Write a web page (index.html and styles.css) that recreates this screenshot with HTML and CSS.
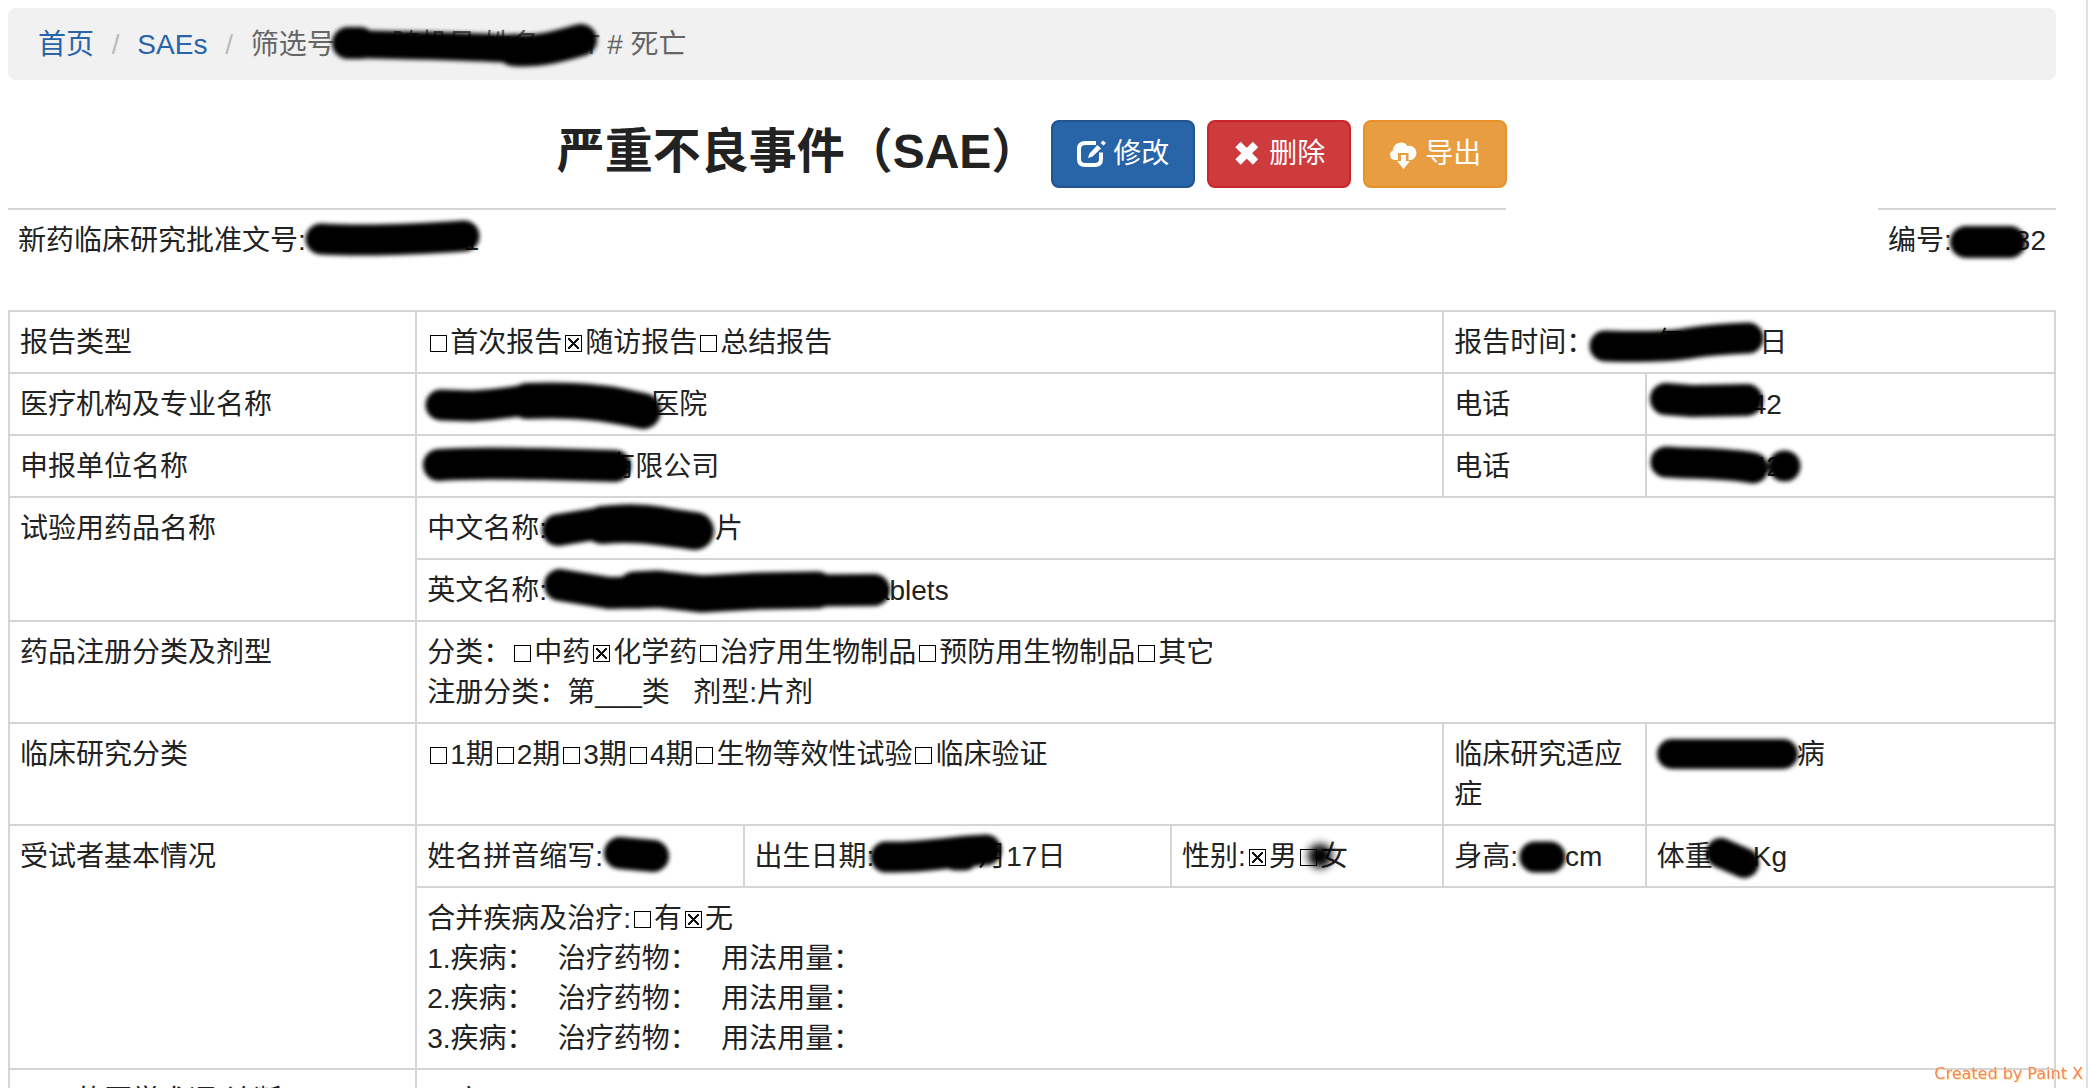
FILE: index.html
```html
<!doctype html>
<html lang="zh-CN">
<head>
    <title>严重不良事件（SAE）</title>
    <meta charset="utf-8" />
    <meta name="viewport" content="width=device-width, initial-scale=1" />
    <link rel="stylesheet" href="styles.css">
</head>

<body>
	<ol class="breadcrumb">
		<li><a href="#">首页</a></li>
		<li><a href="#">SAEs</a></li>
		<li class="active">筛选号<span class="ink ink-crumb">随机号 姓名<svg><path d="M13 19C60 20 120 21 158 23S215 26 246 16" stroke-width="28"/><path d="M13 18h12M178 25c24 2 40-2 68-10" stroke-width="32"/></svg></span>T # 死亡</li>
	</ol>

	<div class="title-bar">
		<h1>严重不良事件（SAE）</h1>
		<button type="button" class="btn btn-primary">
			<svg class="icon" viewBox="0 0 28 28"><path d="M19 3H8.500Q2 3 2 9V19Q2 25 8 25H18Q24 25 24 19V12.500" fill="none" stroke="#fff" stroke-width="4"/><path d="M11 18L12.500 13.500 20.500 5 24 8.500 15.500 16.500zM23.500 3L26 .5 29 3 26.500 5.500z" fill="#fff"/></svg>
			修改
		</button>
		<button type="button" class="btn btn-danger">
			<svg class="icon" viewBox="0 0 28 28"><path d="M5 4.500L22.500 22M22.500 4.500L5 22" fill="none" stroke="#fff" stroke-width="7.500"/></svg>
			删除
		</button>
		<button type="button" class="btn btn-warning">
			<svg class="icon" viewBox="0 0 28 28"><path d="M9 20H5.500A5 5 0 0 1 4 10.500A8 8 0 0 1 18.500 6A7 7 0 1 1 22 20H19.500V13H9z" fill="#fff"/><path d="M12 15h5v6h4l-6.500 8-6.500-8h4z" fill="#fff"/></svg>
			导出
		</button>
	</div>

	<div class="meta">
		<div class="meta-left">新药临床研究批准文号:<span class="ink ink-approval"><svg><path d="M15 18C50 20 100 19 158 15" stroke-width="31"/></svg></span>1</div>
		<div>编号:<span class="ink ink-serial"><svg><path d="M14 21H58" stroke-width="32"/></svg></span>32</div>
	</div>

	<table class="report">
		<colgroup>
			<col class="c1"><col class="c2"><col class="c3"><col class="c4"><col class="c5"><col>
		</colgroup>
		<tr>
			<td>报告类型</td>
			<td colspan="3"><label><input type="checkbox">首次报告</label><label><input type="checkbox" checked>随访报告</label><label><input type="checkbox">总结报告</label></td>
			<td colspan="2">报告时间：<span class="ink ink-date">年<svg><path d="M11 23C40 24 70 24 90 21S120 16 154 15" stroke-width="31"/></svg></span>日</td>
		</tr>
		<tr>
			<td>医疗机构及专业名称</td>
			<td colspan="3"><span class="ink ink-hospital"><svg><path d="M14 20L45 21C80 19 90 15 110 15S170 13 190 18L218 26" stroke-width="31"/><path d="M100 16C150 14 180 18 216 26" stroke-width="36"/></svg></span>医院</td>
			<td>电话</td>
			<td><span class="ink ink-phone"><svg><path d="M9 14L35 16 90 15" stroke-width="32"/></svg></span>42</td>
		</tr>
		<tr>
			<td>申报单位名称</td>
			<td colspan="3"><span class="ink ink-company"><svg><path d="M12 18C50 15 90 17 115 17L188 19" stroke-width="32"/></svg></span>有限公司</td>
			<td>电话</td>
			<td><span class="ink ink-phone"><svg><path d="M9 15C40 17 70 16 96 21M127 19h1" stroke-width="31"/></svg></span>42</td>
		</tr>
		<tr>
			<td rowspan="2">试验用药品名称</td>
			<td colspan="5">中文名称:<span class="ink ink-drug"><svg><path d="M11 21L55 14C80 9 110 10 149 22" stroke-width="32"/><path d="M55 16C90 13 110 17 148 22" stroke-width="38"/></svg></span>片</td>
		</tr>
		<tr>
			<td colspan="5">英文名称:<span class="ink ink-drug-en"><svg><path d="M13 14L62 22 112 21 327 19" stroke-width="32"/><path d="M88 19L110 18 155 23 210 20 270 19" stroke-width="37"/></svg></span>ablets</td>
		</tr>
		<tr>
			<td>药品注册分类及剂型</td>
			<td colspan="5">分类：<label><input type="checkbox">中药</label><label><input type="checkbox" checked>化学药</label><label><input type="checkbox">治疗用生物制品</label><label><input type="checkbox">预防用生物制品</label><label><input type="checkbox">其它</label><br>
			注册分类：第___类&nbsp;&nbsp;&nbsp;剂型:片剂</td>
		</tr>
		<tr>
			<td>临床研究分类</td>
			<td colspan="3"><label><input type="checkbox">1期</label><label><input type="checkbox">2期</label><label><input type="checkbox">3期</label><label><input type="checkbox">4期</label><label><input type="checkbox">生物等效性试验</label><label><input type="checkbox">临床验证</label></td>
			<td>临床研究适应症</td>
			<td><span class="ink ink-disease"><svg><path d="M15 19H126" stroke-width="30"/></svg></span>病</td>
		</tr>
		<tr>
			<td rowspan="2">受试者基本情况</td>
			<td>姓名拼音缩写:<span class="ink ink-initials"><svg><path d="M17 16L50 19" stroke-width="32"/></svg></span></td>
			<td>出生日期:<span class="ink ink-birth">月<svg><path d="M12 20C50 21 80 14 112 13M82 18h8" stroke-width="31"/></svg></span>17日</td>
			<td>性别:<label><input type="checkbox" checked>男</label><label><input type="checkbox"><span class="ink ink-smudge"><svg><circle cx="0" cy="19" r="12"/></svg></span>女</label></td>
			<td>身高:<span class="ink ink-height"><svg><path d="M17 20H32" stroke-width="31"/></svg></span>cm</td>
			<td>体重<span class="ink ink-weight"><svg><path d="M8 16L31 26" stroke-width="30"/></svg></span>Kg</td>
		</tr>
		<tr>
			<td colspan="5">合并疾病及治疗:<label><input type="checkbox">有</label><label><input type="checkbox" checked>无</label><br>
			1.疾病：&nbsp;&nbsp;&nbsp;治疗药物：&nbsp;&nbsp;&nbsp;用法用量：<br>
			2.疾病：&nbsp;&nbsp;&nbsp;治疗药物：&nbsp;&nbsp;&nbsp;用法用量：<br>
			3.疾病：&nbsp;&nbsp;&nbsp;治疗药物：&nbsp;&nbsp;&nbsp;用法用量：</td>
		</tr>
		<tr>
			<td>SAE的医学术语(诊断)</td>
			<td colspan="5">死亡</td>
		</tr>
	</table>

	<div class="watermark">Created by Paint X</div>
</body>
</html>
```
FILE: styles.css
```css
* {
	box-sizing: border-box;
}
body {
	margin: 0;
	padding: 8px 30px 0 8px;
	min-height: 100vh;
	border-right: 2px solid #e0e0e0;
	background-color: #fff;
	color: #222;
	font-family: "Liberation Sans", "Noto Sans CJK SC", sans-serif;
	font-size: 28px;
	line-height: 40px;
}

/* breadcrumb */
.breadcrumb {
	margin: 0 0 40px;
	padding: 17px 30px 15px;
	list-style: none;
	background-color: #f1f1f1;
	border-radius: 8px;
}
.breadcrumb li {
	display: inline-block;
}
.breadcrumb li + li:before {
	content: "/\00a0";
	padding: 0 10px;
	color: #bbb;
}
.breadcrumb a {
	color: #2864a8;
	text-decoration: none;
}
.breadcrumb .active {
	color: #666;
}

/* title and buttons */
.title-bar {
	display: flex;
	justify-content: center;
	align-items: baseline;
	gap: 12px;
	margin-bottom: 20px;
}
h1 {
	margin: 0;
	font-size: 48px;
	line-height: 52px;
	font-weight: bold;
}
.btn {
	display: flex;
	align-items: center;
	gap: 8px;
	padding: 12px 24px;
	border: 2px solid;
	border-radius: 8px;
	color: #fff;
	font-family: inherit;
	font-size: 28px;
	line-height: 40px;
	cursor: pointer;
}
.btn-primary {
	background-color: #2864a8;
	border-color: #225590;
}
.btn-danger {
	background-color: #ce3b3d;
	border-color: #c9262b;
}
.btn-warning {
	background-color: #e89d40;
	border-color: #e6912a;
}
.icon {
	width: 28px;
	height: 28px;
	overflow: visible;
}

/* approval number and serial */
.meta {
	display: flex;
	justify-content: space-between;
	margin-bottom: 40px;
}
.meta div {
	padding: 11px 10px 9px;
	border-top: 2px solid #d5d5d5;
}
.meta .meta-left {
	width: 73.15%;
}

/* report table */
.report {
	width: 100%;
	table-layout: fixed;
	border-collapse: collapse;
}
.report td {
	padding: 11px 10px 9px;
	border: 2px solid #d5d5d5;
	vertical-align: top;
}
.c1 { width: 19.9%; }
.c2 { width: 16%; }
.c3 { width: 20.9%; }
.c4 { width: 13.3%; }
.c5 { width: 9.9%; }

input[type="checkbox"] {
	-webkit-appearance: none;
	appearance: none;
	width: 17px;
	height: 17px;
	margin: 0 3px;
	border: 1px solid #000;
}
input[type="checkbox"]:checked {
	background:
		linear-gradient(45deg, transparent 43%, #111 43%, #111 57%, transparent 57%) center / 11px 11px no-repeat,
		linear-gradient(-45deg, transparent 43%, #111 43%, #111 57%, transparent 57%) center / 11px 11px no-repeat;
}

/* marker strokes over private data */
.ink {
	display: inline-block;
	position: relative;
	height: 40px;
	vertical-align: top;
	white-space: nowrap;
	z-index: 1;
}
.ink svg {
	position: absolute;
	top: 0;
	left: 0;
	width: 100%;
	height: 40px;
	overflow: visible;
	fill: none;
	stroke: #000;
	stroke-linecap: round;
	stroke-linejoin: round;
	filter: blur(2px);
}
.ink-crumb { width: 248px; text-indent: 57px; }
.ink-approval { width: 158px; }
.ink-serial { width: 63px; }
.ink-date { width: 165px; text-indent: 62px; }
.ink-hospital { width: 224px; }
.ink-phone { width: 94px; }
.ink-company { width: 180px; }
.ink-drug { width: 168px; }
.ink-drug-en { width: 327px; }
.ink-disease { width: 140px; }
.ink-initials { width: 62px; }
.ink-birth { width: 132px; text-indent: 104px; }
.ink-height { width: 47px; }
.ink-weight { width: 40px; }
.ink-smudge { width: 0; }
.ink-smudge svg {
	width: 1px;
	fill: #000;
	stroke: none;
	filter: blur(4px);
}

.watermark {
	position: fixed;
	right: 5px;
	bottom: 4px;
	color: #f5835f;
	font-family: "DejaVu Sans", sans-serif;
	font-size: 16px;
	line-height: 20px;
	text-shadow: 1px 1px 0 #fdeaa0;
}
```
